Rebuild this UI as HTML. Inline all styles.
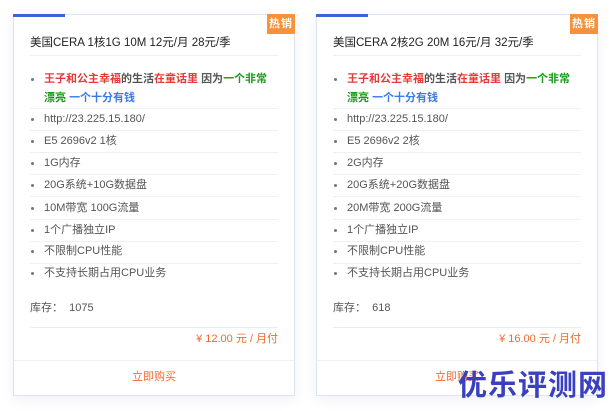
<!DOCTYPE html><html><head><meta charset="utf-8"><style>
body{margin:0;width:616px;height:411px;background:#fff;position:relative;overflow:hidden;font-family:"Liberation Sans","Noto Sans CJK SC",sans-serif;font-size:11px;color:#555}
.c{position:absolute;top:14px;width:282px;height:382px;border:1px solid #dde3f0;box-sizing:border-box;background:#fff;box-shadow:0 4px 12px rgba(60,80,160,.08)}
.bar{position:absolute;left:-1px;top:-1px;width:52px;height:3px;background:#3b63de}
.hot{position:absolute;right:-1px;top:-1px;width:28px;height:20px;background:#f7913a;color:#fff;font-weight:bold;font-size:11px;line-height:20px;text-align:center;letter-spacing:1px}
.t{position:absolute;left:16px;top:19px;font-size:11.5px;color:#222}
.ln{position:absolute;left:16px;right:16px;height:1px;background:#eef0f4}
.i{position:absolute;left:16px;right:16px;padding-left:14px;line-height:18px}
.i:before{content:"";position:absolute;left:1px;top:8px;width:3px;height:3px;background:#777;border-radius:50%}
.r{color:#e53a3a;font-weight:bold}.g{color:#1a9a1a;font-weight:bold}.b{color:#3b7be8;font-weight:bold}.k{font-weight:bold}
.s{position:absolute;left:16px;top:284px}
.p{position:absolute;right:16px;top:315px;color:#f06a2e}
.f{position:absolute;left:0;right:0;bottom:0;height:34px;border-top:1px solid #f0f0f4;text-align:center;line-height:32px;color:#f06a2e}
.wm{position:absolute;left:458px;top:366px;font-size:29px;font-weight:bold;color:#3a40c0;letter-spacing:1px;font-family:"Noto Sans CJK SC",sans-serif;line-height:34px}
</style></head><body>
<div class="c" style="left:13px">
<div class="bar"></div><div class="hot">热销</div>
<div class="t">美国CERA 1核1G 10M 12元/月 28元/季</div>
<div class="ln" style="top:40px"></div>
<div class="i" style="top:55px;line-height:19px"><span class="r">王子和公主幸福</span><span class="k">的生活</span><span class="r">在童话里</span> <span class="k">因为</span><span class="g">一个非常漂亮</span> <span class="b">一个十分有钱</span></div>
<div class="ln" style="top:93px"></div>
<div class="i" style="top:95px">http://23.225.15.180/</div>
<div class="ln" style="top:115px"></div>
<div class="i" style="top:117px">E5 2696v2 1核</div>
<div class="ln" style="top:137px"></div>
<div class="i" style="top:139px">1G内存</div>
<div class="ln" style="top:159px"></div>
<div class="i" style="top:161px">20G系统+10G数据盘</div>
<div class="ln" style="top:181px"></div>
<div class="i" style="top:184px">10M带宽 100G流量</div>
<div class="ln" style="top:204px"></div>
<div class="i" style="top:206px">1个广播独立IP</div>
<div class="ln" style="top:226px"></div>
<div class="i" style="top:227px">不限制CPU性能</div>
<div class="ln" style="top:248px"></div>
<div class="i" style="top:249px">不支持长期占用CPU业务</div>
<div class="s">库存：&nbsp; 1075</div>
<div class="ln" style="top:312px;background:#e8edf8"></div>
<div class="p">¥ 12.00 元 / 月付</div>
<div class="f">立即购买</div>
</div>
<div class="c" style="left:316px">
<div class="bar"></div><div class="hot">热销</div>
<div class="t">美国CERA 2核2G 20M 16元/月 32元/季</div>
<div class="ln" style="top:40px"></div>
<div class="i" style="top:55px;line-height:19px"><span class="r">王子和公主幸福</span><span class="k">的生活</span><span class="r">在童话里</span> <span class="k">因为</span><span class="g">一个非常漂亮</span> <span class="b">一个十分有钱</span></div>
<div class="ln" style="top:93px"></div>
<div class="i" style="top:95px">http://23.225.15.180/</div>
<div class="ln" style="top:115px"></div>
<div class="i" style="top:117px">E5 2696v2 2核</div>
<div class="ln" style="top:137px"></div>
<div class="i" style="top:139px">2G内存</div>
<div class="ln" style="top:159px"></div>
<div class="i" style="top:161px">20G系统+20G数据盘</div>
<div class="ln" style="top:181px"></div>
<div class="i" style="top:184px">20M带宽 200G流量</div>
<div class="ln" style="top:204px"></div>
<div class="i" style="top:206px">1个广播独立IP</div>
<div class="ln" style="top:226px"></div>
<div class="i" style="top:227px">不限制CPU性能</div>
<div class="ln" style="top:248px"></div>
<div class="i" style="top:249px">不支持长期占用CPU业务</div>
<div class="s">库存：&nbsp; 618</div>
<div class="ln" style="top:312px;background:#e8edf8"></div>
<div class="p">¥ 16.00 元 / 月付</div>
<div class="f">立即购买</div>
</div>
<div class="wm">优乐评测网</div>
</body></html>
